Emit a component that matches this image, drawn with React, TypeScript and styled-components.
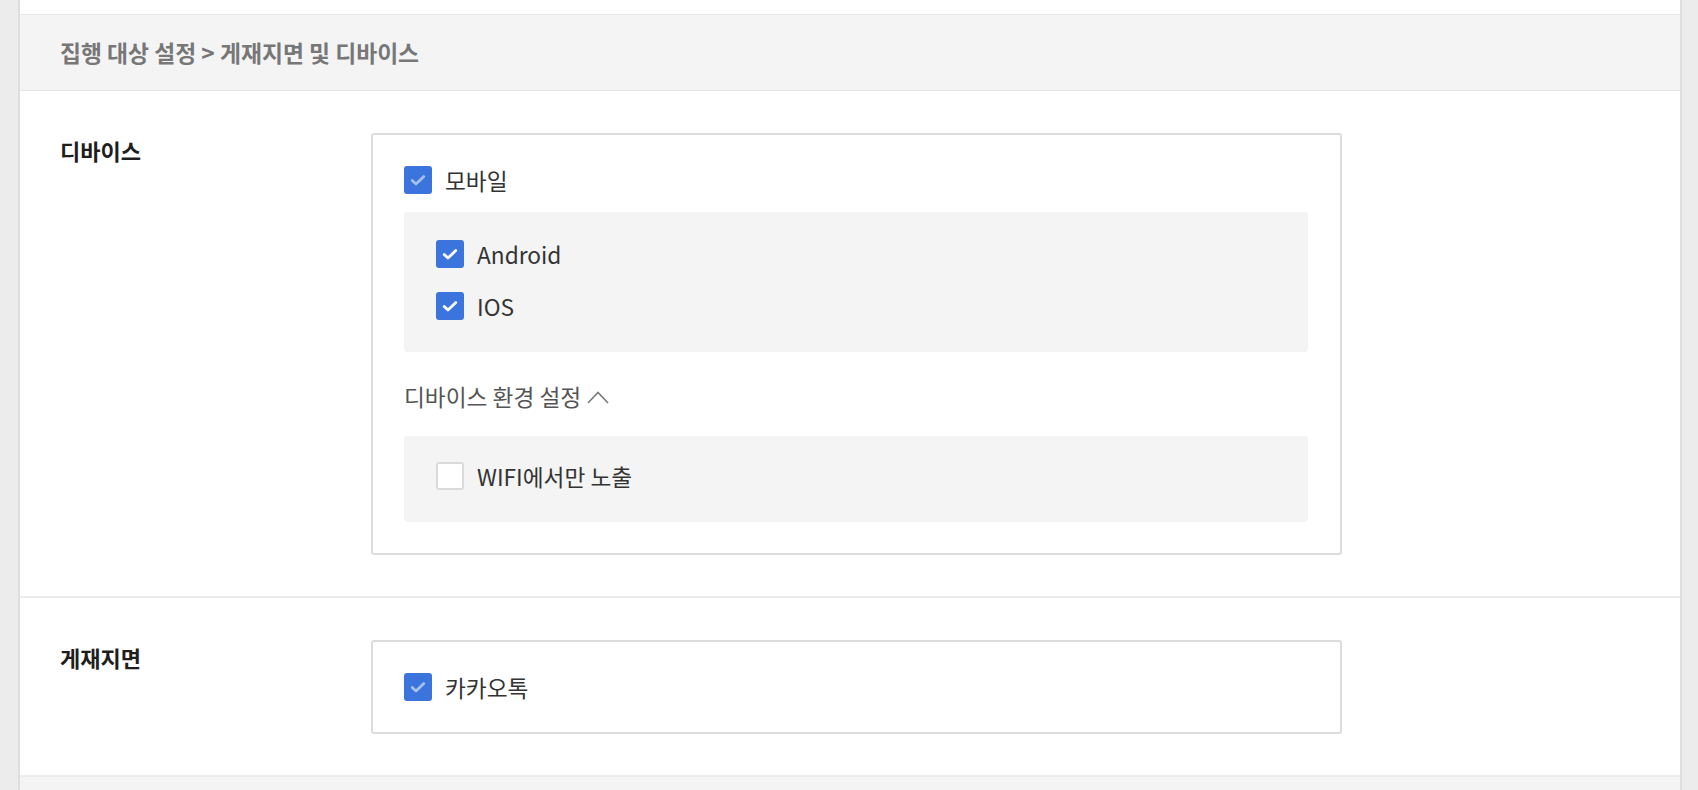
import React from "react";
import styled, { createGlobalStyle } from "styled-components";

const GlobalStyle = createGlobalStyle`
  html, body {
    margin: 0;
    padding: 0;
    height: 100%;
  }
  body {
    font-family: "Noto Sans CJK KR", "Noto Sans", sans-serif;
    color: #333;
  }
  #root {
    min-height: 100vh;
    display: flex;
  }
`;

const Page = styled.div`
  display: flex;
  flex: 1;
  background: #ececec;
`;

const SideStrip = styled.div<{ side: "left" | "right" }>`
  width: 16px;
  background: #ececec;
  ${({ side }) =>
    side === "left"
      ? "width: 18px; border-right: 2px solid #dedede;"
      : "border-left: 2px solid #dedede;"}
`;

const Main = styled.main`
  flex: 1;
  display: flex;
  flex-direction: column;
  background: #fff;
`;

const TopGap = styled.div`
  height: 14px;
  border-bottom: 1px solid #e8e8e8;
`;

const Header = styled.div`
  height: 75px;
  display: flex;
  align-items: center;
  padding-left: 40px;
  background: #f4f4f4;
  border-bottom: 1px solid #e6e6e6;
  font-size: 22.8px;
  font-weight: 700;
  color: #777;
`;

const Row = styled.section`
  display: grid;
  grid-template-columns: 351px 971px;
  padding: 42px 0 41px;
  border-bottom: 2px solid #ededed;
`;

const Label = styled.div`
  padding: 1px 0 0 40px;
  line-height: 32px;
  font-size: 22px;
  font-weight: 700;
  color: #1e1e1e;
`;

const Box = styled.div`
  border: 2px solid #dcdcdc;
  border-radius: 3px;
  padding: 31px 32px 31px 31px;
  display: flex;
  flex-direction: column;
`;

const Panel = styled.div<{ top: number }>`
  background: #f4f4f4;
  border-radius: 4px;
  padding: ${({ top }) => top}px 32px 32px;
  display: flex;
  flex-direction: column;
  gap: 24px;
`;

const OptionRow = styled.label`
  display: flex;
  align-items: center;
  gap: 13px;
  height: 28px;
  font-size: 22.7px;
  color: #333;
  cursor: pointer;
`;

const Box28 = styled.span<{ checked: boolean }>`
  width: 28px;
  height: 28px;
  flex: none;
  box-sizing: border-box;
  border-radius: 3px;
  display: flex;
  align-items: center;
  justify-content: center;
  background: ${({ checked }) => (checked ? "#3a74dc" : "#fff")};
  border: ${({ checked }) => (checked ? "none" : "2px solid #dadada")};
`;

const Toggle = styled.div`
  display: flex;
  align-items: center;
  gap: 6px;
  margin: 30px 0 24px;
  line-height: 30px;
  font-size: 22.7px;
  color: #555;
`;

const Spacer = styled.div`
  height: 18px;
`;

const Footer = styled.div`
  flex: 1;
  background: #f4f4f4;
`;

type CheckProps = {
  checked?: boolean;
  muted?: boolean;
  label: string;
};

const Check: React.FC<CheckProps> = ({ checked = false, muted = false, label }) => (
  <OptionRow>
    <Box28 checked={checked}>
      {checked && (
        <svg width="18" height="18" viewBox="0 0 18 18">
          <path
            d="M3.2 9.4l3.8 3.6L14.8 5.6"
            fill="none"
            stroke="#fff"
            strokeOpacity={muted ? 0.55 : 1}
            strokeWidth="2.8"
            strokeLinecap="round"
            strokeLinejoin="round"
          />
        </svg>
      )}
    </Box28>
    {label}
  </OptionRow>
);

const ChevronUp = () => (
  <svg width="22" height="14" viewBox="0 0 22 14">
    <path d="M1 13L11 2.5L21 13" fill="none" stroke="#7a7a7a" strokeWidth="1.6" />
  </svg>
);

export default function App() {
  return (
    <>
      <GlobalStyle />
      <Page>
        <SideStrip side="left" />
        <Main>
          <TopGap />
          <Header>집행 대상 설정 &gt; 게재지면 및 디바이스</Header>
          <Row>
            <Label>디바이스</Label>
            <Box>
              <Check checked muted label="모바일" />
              <Spacer />
              <Panel top={28}>
                <Check checked label="Android" />
                <Check checked label="IOS" />
              </Panel>
              <Toggle>
                디바이스 환경 설정
                <ChevronUp />
              </Toggle>
              <Panel top={26}>
                <Check label="WIFI에서만 노출" />
              </Panel>
            </Box>
          </Row>
          <Row>
            <Label>게재지면</Label>
            <Box>
              <Check checked muted label="카카오톡" />
            </Box>
          </Row>
          <Footer />
        </Main>
        <SideStrip side="right" />
      </Page>
    </>
  );
}
